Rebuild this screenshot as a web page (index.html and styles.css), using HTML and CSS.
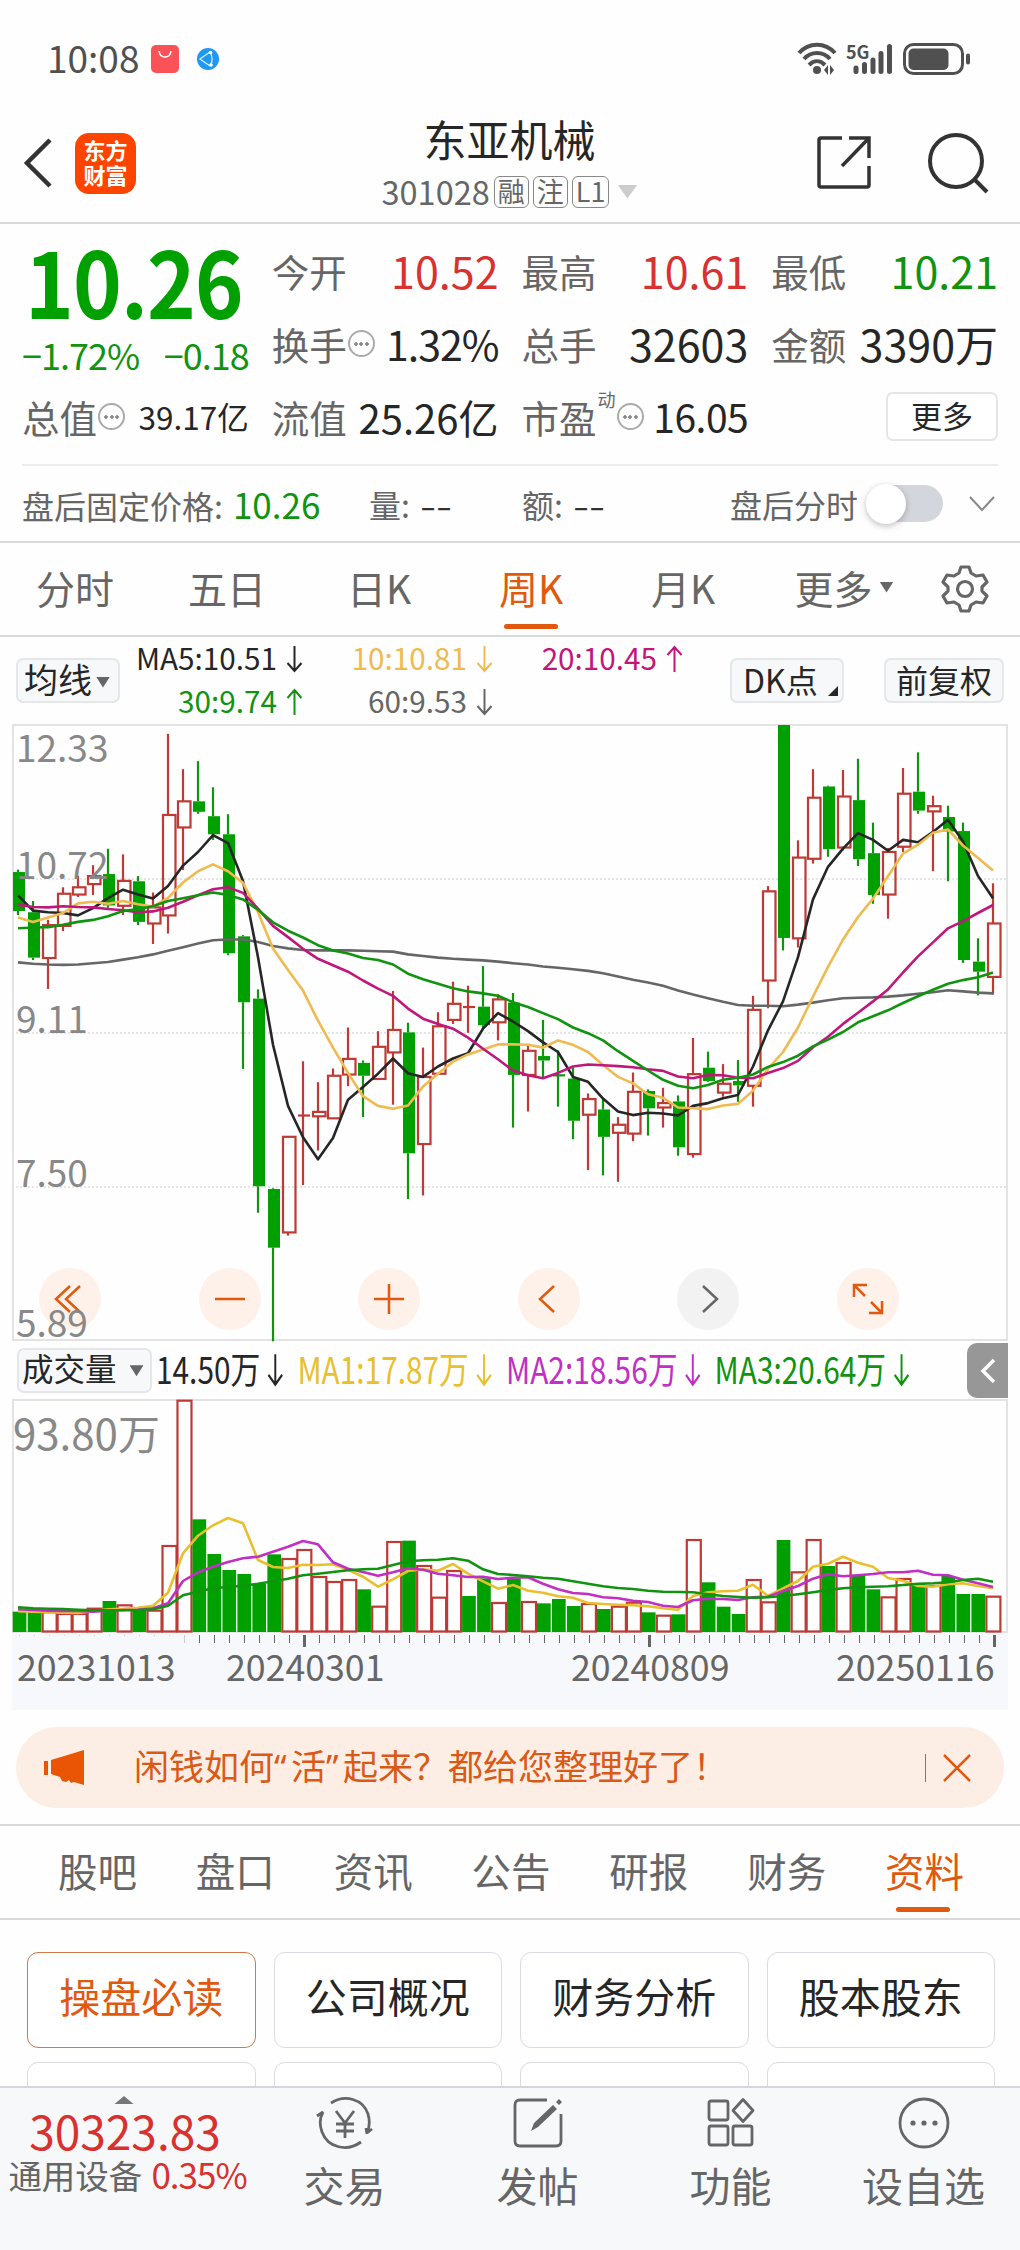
FILE: index.html
```html
<!DOCTYPE html>
<html lang="zh-CN">

<head>
    <meta charset="UTF-8">
    <meta name="viewport" content="width=device-width, initial-scale=1.0">
    <title>东亚机械 301028</title>
    <link rel="stylesheet" href="styles.css">
</head>

<body>

    <!-- 状态栏 -->
    <div class="status-bar">
        <span class="time">10:08</span>
        <svg class="app-icon" width="28" height="28" viewBox="0 0 28 28">
            <rect width="28" height="28" rx="5" fill="#fb5258" />
            <path d="M8 6c1 8 11 8 12 0" fill="none" stroke="#fff" stroke-width="1.6" />
        </svg>
        <svg class="net-icon" width="22" height="22" viewBox="0 0 22 22">
            <circle cx="11" cy="11" r="11" fill="#1e98f0" />
            <path d="M13 4L3 11l10 7M13 4c3 5 3 9 0 14" fill="none" stroke="#d5edff" stroke-width="1.3" />
            <circle cx="13.500" cy="4.500" r="1.800" fill="#fff" />
            <circle cx="14" cy="17" r="1.800" fill="#fff" />
        </svg>
        <svg class="signal" width="176" height="48" viewBox="0 -6 176 48">
            <g fill="none" stroke="#505050" stroke-width="4">
                <path d="M2 12c10-11 26-11 36 0" />
                <path d="M7 18c7-8 19-8 26 0" />
                <path d="M12 24c5-5 11-5 16 0" />
            </g>
            <circle cx="20" cy="29" r="4" fill="#505050" />
            <path d="M27 29l4-5v10zM37 29l-4-5v10z" fill="#505050" />
            <text class="sig-text" x="49" y="18">5G</text>
            <g stroke="#505050" stroke-width="5" stroke-linecap="round">
                <path d="M59 27v3.500M67.500 23.500v7M76 19v11.500M84 12.500v18M92.500 5.500v25" />
            </g>
            <rect x="107.500" y="3.500" width="58" height="29" rx="9" fill="none" stroke="#505050" stroke-width="3" />
            <rect x="111.500" y="7.500" width="40" height="21.500" rx="5" fill="#505050" />
            <path d="M171 14.500v7" stroke="#505050" stroke-width="4" stroke-linecap="round" />
        </svg>
    </div>

    <!-- 标题栏 -->
    <div class="header">
        <svg class="back" width="32" height="52" viewBox="0 0 32 52">
            <path d="M28 3L5 26l23 23" fill="none" stroke="#333" stroke-width="4.500" />
        </svg>
        <div class="logo"><span>东方</span><span>财富</span></div>
        <div class="title">
            <div class="name">东亚机械</div>
            <div class="code">301028<i>融</i><i>注</i><i>L1</i><b class="caret"></b></div>
        </div>
        <svg class="share" width="56" height="56" viewBox="0 0 56 56" fill="none" stroke="#333" stroke-width="3.500">
            <path d="M26 3H5q-2 0-2 2v45q0 2 2 2h46q2 0 2-2V31M33 3h20v20M53 3L26 31" />
        </svg>
        <svg class="search" width="64" height="64" viewBox="0 0 64 64" fill="none" stroke="#333" stroke-width="4">
            <circle cx="30" cy="30" r="26" />
            <path d="M48 48l13 13" />
        </svg>
    </div>

    <!-- 行情数据 -->
    <div class="quote">
        <div class="main-price">
            <div class="price">10.26</div>
            <div class="change"><span>−1.72%</span><span>−0.18</span></div>
        </div>
        <div class="cell"><label>今开</label><span class="up">10.52</span></div>
        <div class="cell"><label>最高</label><span class="up">10.61</span></div>
        <div class="cell"><label>最低</label><span class="down">10.21</span></div>
        <div class="cell"><label>换手</label><em class="info"></em><span class="rate">1.32%</span></div>
        <div class="cell"><label>总手</label><span>32603</span></div>
        <div class="cell"><label>金额</label><span>3390万</span></div>
        <div class="cell"><label>总值</label><em class="info"></em><span class="small">39.17亿</span></div>
        <div class="cell"><label>流值</label><span class="mid">25.26亿</span></div>
        <div class="cell"><label>市盈</label><sup>动</sup><em class="info"></em><span class="pe">16.05</span></div>
        <div class="cell"><button class="more">更多</button></div>
    </div>

    <div class="after">
        <span class="fixed">盘后固定价格:<b>10.26</b></span>
        <span class="vol">量:<b>--</b></span>
        <span class="amt">额:<b>--</b></span>
        <span class="switch-label">盘后分时</span>
        <span class="switch"></span>
        <svg width="26" height="16" viewBox="0 0 26 16">
            <path d="M1 1l12 13L25 1" fill="none" stroke="#888" stroke-width="2" />
        </svg>
    </div>

    <!-- 周期切换 -->
    <div class="period">
        <span>分时</span>
        <span>五日</span>
        <span>日K</span>
        <span class="active">周K</span>
        <span>月K</span>
        <span class="last">更多<b class="caret"></b></span>
        <svg width="48" height="48" viewBox="0 0 48 48" fill="none" stroke="#666" stroke-width="3.200" stroke-linejoin="round">
            <path d="M20 2h8l2 6 5 3 7-1 4 7-5 5v4l5 5-4 7-7-1-5 3-2 6h-8l-2-6-5-3-7 1-4-7 5-5v-4l-5-5 4-7 7 1 5-3z" />
            <circle cx="24" cy="24" r="7.500" />
        </svg>
    </div>

    <!-- 均线指标 -->
    <div class="ma-bar">
        <button class="ma-btn">均线<b class="caret"></b></button>
        <div class="ma-values">
            <span class="c5">MA5:10.51<svg class="arrow"><use href="#down" /></svg></span>
            <span class="c10">10:10.81<svg class="arrow"><use href="#down" /></svg></span>
            <span class="c20">20:10.45<svg class="arrow"><use href="#up" /></svg></span>
            <span class="c30">30:9.74<svg class="arrow"><use href="#up" /></svg></span>
            <span class="c60">60:9.53<svg class="arrow"><use href="#down" /></svg></span>
        </div>
        <button class="dk">DK点</button>
        <button class="fq">前复权</button>
    </div>

    <!-- K线图 -->
    <div class="chart">
        <div class="tools">
            <span><svg viewBox="0 0 62 62"><path d="M31 18L17 31l14 13M41 18L27 31l14 13" /></svg></span>
            <span><svg viewBox="0 0 62 62"><path d="M16 31h30" /></svg></span>
            <span><svg viewBox="0 0 62 62"><path d="M16 31h30M31 16v30" /></svg></span>
            <span><svg viewBox="0 0 62 62"><path d="M36 18L22 31l14 13" /></svg></span>
            <span class="off"><svg viewBox="0 0 62 62"><path d="M26 18l14 13-14 13" /></svg></span>
            <span><svg viewBox="0 0 62 62"><path d="M17 29V17h13M17 17l11 11M45 33v12H32M45 45L34 34" /></svg></span>
        </div>
        <svg id="kline" width="996" height="617"></svg>
    </div>

    <!-- 成交量 -->
    <div class="vol-bar">
        <button class="vol-btn">成交量<b class="caret"></b></button>
        <div class="vol-values">
            <span class="v0">14.50万<svg class="arrow"><use href="#down" /></svg></span>
            <span class="v1">MA1:17.87万<svg class="arrow"><use href="#down" /></svg></span>
            <span class="v2">MA2:18.56万<svg class="arrow"><use href="#down" /></svg></span>
            <span class="v3">MA3:20.64万<svg class="arrow"><use href="#down" /></svg></span>
        </div>
        <div class="collapse">
            <svg width="16" height="26" viewBox="0 0 16 26">
                <path d="M14 2L3 13l11 11" fill="none" stroke="#fff" stroke-width="3.500" />
            </svg>
        </div>
    </div>
    <div class="volume">
        <svg id="volume" width="996" height="234"></svg>
    </div>
    <div class="axis">
        <svg id="ticks" width="996" height="14"></svg>
        <div class="dates">
            <span>20231013</span>
            <span>20240301</span>
            <span>20240809</span>
            <span>20250116</span>
        </div>
    </div>

    <!-- 广告条 -->
    <div class="banner">
        <svg width="44" height="36" viewBox="0 0 44 36" fill="#e95504">
            <path d="M1 11h4v14H1zM8 10L41 0v35l-10-3-3 1-2-3-3 2-4-1-2-4-9-3z" />
        </svg>
        <p>闲钱如何<q>“</q>活<q>”</q>起来？都给您整理好了！</p>
        <svg class="close" width="30" height="28" viewBox="0 0 30 28">
            <path d="M2 1l26 26M28 1L2 27" stroke="#e0590f" stroke-width="2.500" />
        </svg>
    </div>

    <!-- 资料导航 -->
    <div class="nav">
        <span>股吧</span>
        <span>盘口</span>
        <span>资讯</span>
        <span>公告</span>
        <span>研报</span>
        <span>财务</span>
        <span class="active">资料</span>
    </div>
    <div class="cards">
        <div class="card active">操盘必读</div>
        <div class="card">公司概况</div>
        <div class="card">财务分析</div>
        <div class="card">股本股东</div>
        <div class="card"></div>
        <div class="card"></div>
        <div class="card"></div>
        <div class="card"></div>
    </div>

    <!-- 底部栏 -->
    <div class="footer">
        <div class="index">
            <b class="caret-up"></b>
            <div class="point">30323.83</div>
            <div class="sector">通用设备<span>0.35%</span></div>
        </div>
        <div class="tab">
            <svg width="60" height="52" viewBox="0 0 60 52" fill="none" stroke="#666" stroke-width="2.800">
                <path d="M16 6C30-3 48 2 53 17q3 10-1 19l5-4M46 45C32 55 13 51 7 35q-4-11 1-20l-6 4M52 37l-1-6" />
                <path d="M21 14l9 12 9-12M30 26v15M21 27h18M21 34h18" />
            </svg>
            <span>交易</span>
        </div>
        <div class="tab">
            <svg width="52" height="52" viewBox="0 0 52 52" fill="none" stroke="#666" stroke-width="2.800">
                <path d="M35 3H8Q3 3 3 8v36q0 5 5 5h36q5 0 5-5V17" />
                <path d="M19 34l3-8L41 8l4 4-19 18zM44 5l3-3 3 3-3 3z" fill="#666" stroke="none" />
            </svg>
            <span>发帖</span>
        </div>
        <div class="tab">
            <svg width="50" height="52" viewBox="0 0 50 52" fill="none" stroke="#666" stroke-width="2.800">
                <rect x="3" y="4" width="19" height="19" rx="2" />
                <rect x="3" y="29" width="19" height="19" rx="2" />
                <rect x="27" y="29" width="19" height="19" rx="2" />
                <path d="M37 2.500l10 11-10 11-10-11z" stroke-linejoin="round" />
            </svg>
            <span>功能</span>
        </div>
        <div class="tab">
            <svg width="52" height="52" viewBox="0 0 52 52">
                <circle cx="26" cy="26" r="24" fill="none" stroke="#666" stroke-width="2.800" />
                <g fill="#666">
                    <circle cx="15" cy="26" r="2.600" />
                    <circle cx="26" cy="26" r="2.600" />
                    <circle cx="37" cy="26" r="2.600" />
                </g>
            </svg>
            <span>设自选</span>
        </div>
    </div>

    <svg width="0" height="0" class="defs">
        <symbol id="down" viewBox="0 0 16 28">
            <path d="M8 1v25M1 18l7 8 7-8" fill="none" stroke="currentColor" stroke-width="2" />
        </symbol>
        <symbol id="up" viewBox="0 0 16 28">
            <path d="M8 27V2M1 10l7-8 7 8" fill="none" stroke="currentColor" stroke-width="2" />
        </symbol>
    </svg>

    <script src="chart.js"></script>
</body>

</html>
```

FILE: styles.css
```css
* {
    box-sizing: border-box;
}

body {
    margin: 0;
    width: 1020px;
    height: 2250px;
    overflow: hidden;
    background: #fefefe;
    color: #262626;
    font-family: "Noto Sans CJK SC", sans-serif;
    line-height: 1;
}

button {
    font-family: inherit;
    color: #262626;
    padding: 0;
    line-height: 1;
}

svg {
    display: block;
    flex: none;
}

i,
em {
    font-style: normal;
}

.defs {
    position: absolute;
}

/* 小三角 */
.caret {
    display: inline-block;
    width: 14px;
    height: 11px;
    background: #666;
    clip-path: polygon(0 0, 100% 0, 50% 100%);
}

/* 状态栏 */
.status-bar {
    height: 118px;
    padding: 0 47px 0 47px;
    display: flex;
    align-items: center;
    color: #505050;
}

.time {
    font-size: 37px;
    width: 104px;
    margin-top: -3px;
}

.net-icon {
    margin-left: 18px;
}

.signal {
    margin-left: auto;
}

.sig-text {
    font-size: 18px;
    font-weight: bold;
    fill: #505050;
}

/* 标题栏 */
.header {
    height: 106px;
    padding: 0 30px 14px 22px;
    border-bottom: 2px solid #d9d9d9;
    display: flex;
    align-items: center;
}

.logo {
    width: 61px;
    height: 61px;
    margin-left: 21px;
    border-radius: 14px;
    background: #ff4400;
    color: #fff;
    font-size: 22px;
    font-weight: bold;
    display: flex;
    flex-direction: column;
    align-items: center;
    justify-content: center;
    gap: 3px;
    padding-bottom: 3px;
}

.title {
    flex: 1;
    padding-left: 67px;
}

.name {
    font-size: 43px;
    text-align: center;
    margin-top: -1px;
}

.code {
    display: flex;
    justify-content: center;
    align-items: center;
    margin-top: 15px;
    font-size: 32.500px;
    color: #666;
    gap: 4px;
}

.code i {
    height: 32px;
    padding: 0 3px;
    border: 1.500px solid #888;
    border-radius: 6px;
    font-size: 27px;
    line-height: 27px;
}

.code .caret {
    width: 20px;
    height: 14px;
    margin-left: 4px;
    background: #ccc;
}

.search {
    margin-left: 54px;
}

/* 行情 */
.quote {
    height: 242px;
    margin: 0 22px;
    padding-top: 10px;
    border-bottom: 2px solid #ececec;
    display: grid;
    grid-template-columns: repeat(4, minmax(0, 1fr));
    grid-template-rows: 73px 73px 73px;
    column-gap: 23px;
}

.main-price {
    grid-row: span 2;
    color: #00a000;
}

.price {
    font-size: 91px;
    font-weight: bold;
    margin: 0 0 0 3px;
    letter-spacing: -1px;
    transform: scaleX(.91);
    transform-origin: left;
}

.change {
    display: flex;
    justify-content: space-between;
    font-size: 36px;
    letter-spacing: -1px;
    color: #109410;
    margin-top: 11px;
}

.cell {
    display: flex;
    align-items: center;
    justify-content: flex-end;
    white-space: nowrap;
}

.cell label {
    margin-right: auto;
    font-size: 37.500px;
    color: #666;
}

.cell span {
    font-size: 43px;
}

.cell span.mid {
    font-size: 40px;
}

.cell span.small {
    font-size: 31.500px;
}

.cell span.rate {
    font-size: 41px;
    letter-spacing: -1px;
}

.cell span.pe {
    font-size: 39px;
    letter-spacing: -.5px;
}

.cell .up {
    color: #d93030;
}

.cell .down {
    color: #109410;
}

.info {
    width: 27px;
    height: 27px;
    border: 2px solid #aaa;
    border-radius: 50%;
    background: radial-gradient(circle, #888 1.500px, transparent 2px) center / 6px 6px no-repeat, radial-gradient(circle, #888 1.500px, transparent 2px) 3px center / 6px 6px no-repeat, radial-gradient(circle, #888 1.500px, transparent 2px) 14px center / 6px 6px no-repeat;
}

.cell label:has(+ .info) {
    margin-right: 1px;
}

.cell .info + span {
    margin-left: auto;
}

.cell label:has(+ sup) {
    margin-right: 0;
}

.cell sup {
    font-size: 18px;
    line-height: 18px;
    color: #666;
    align-self: flex-start;
    margin: 10px 1px 0 1px;
}

.more {
    width: 112px;
    height: 49px;
    border: 2px solid #e5e5e5;
    border-radius: 7px;
    background: #fff;
    font-size: 31px;
    padding-bottom: 4px;
}

/* 盘后 */
.after {
    height: 77px;
    padding: 0 25px 0 22px;
    border-bottom: 2px solid #d9d9d9;
    display: flex;
    align-items: center;
    font-size: 32px;
    color: #666;
}

.after span {
    white-space: nowrap;
}

.after b {
    display: inline-block;
    font-weight: normal;
    color: #333;
    margin-left: 10px;
    transform: scaleX(1.45);
    transform-origin: left;
}

.fixed {
    width: 347px;
}

.after .fixed b {
    font-size: 35px;
    color: #109410;
    transform: none;
}

.vol {
    width: 153px;
}

.amt {
    width: 208px;
}

.switch {
    width: 76px;
    height: 37px;
    margin-left: 9px;
    border-radius: 19px;
    background: #d3d6dc;
    position: relative;
}

.switch::before {
    content: "";
    position: absolute;
    left: -1px;
    top: -1px;
    width: 40px;
    height: 40px;
    border-radius: 50%;
    background: #fff;
    box-shadow: 0 2px 6px rgba(0, 0, 0, .25);
}

.after svg {
    margin-left: auto;
}

/* 周期 */
.period {
    height: 94px;
    border-bottom: 2px solid #d9d9d9;
    display: flex;
    align-items: center;
    font-size: 39px;
    color: #666;
}

.period span,
.nav span {
    height: 100%;
    display: flex;
    align-items: center;
    position: relative;
    padding-bottom: 4px;
}

.period span {
    width: 152px;
    justify-content: center;
    padding-right: 2px;
}

.period .last {
    width: 158px;
    padding-left: 12px;
}

.period svg {
    margin-left: 23px;
}

.period .caret {
    margin-left: 7px;
}

.period .active,
.nav .active {
    color: #e0590f;
}

.period .active::after,
.nav .active::after {
    content: "";
    position: absolute;
    left: calc(50% - 28px);
    bottom: 6px;
    width: 54px;
    height: 5px;
    border-radius: 3px;
    background: #e0590f;
}

/* 均线 */
.ma-bar {
    height: 87px;
    padding: 0 16px;
    display: flex;
    align-items: center;
}

.ma-bar button,
.vol-btn {
    height: 45px;
    border: 2px solid #e4e6ea;
    border-radius: 7px;
    background: #f7f8fa;
    font-size: 32px;
    padding-bottom: 4px;
}

.ma-bar .ma-btn {
    width: 104px;
    font-size: 34px;
    text-align: left;
    padding-left: 6px;
}

.ma-btn .caret {
    margin-left: 4px;
    vertical-align: 5px;
}

.ma-values {
    width: 570px;
    margin-left: -7px;
    display: grid;
    grid-template-columns: repeat(3, 190px);
    row-gap: 14px;
    font-size: 29.700px;
    margin-top: -3px;
}

.ma-values span {
    display: flex;
    align-items: center;
    justify-content: flex-end;
    height: 29px;
}

.ma-values .arrow {
    width: 17px;
    height: 28px;
    margin: 3px 0 0 9px;
}

.c5 { color: #262626; }
.c10 { color: #efbb50; }
.c20 { color: #c0177c; }
.c30 { color: #109410; }
.c60 { color: #666; }

.ma-bar .dk {
    width: 114px;
    margin-left: auto;
    position: relative;
    text-align: left;
    padding-left: 11px;
}

.dk::after {
    content: "";
    position: absolute;
    right: 4px;
    bottom: 5px;
    border: 5px solid #262626;
    border-top-color: transparent;
    border-left-color: transparent;
}

.ma-bar .fq {
    width: 120px;
    margin-left: 40px;
}

/* K线 */
.chart {
    height: 617px;
    margin-left: 12px;
    position: relative;
}

#kline {
    position: relative;
    overflow: visible;
}

.grid {
    stroke: #ddd;
    stroke-width: 1.500;
    stroke-dasharray: 2 2;
}

.frame {
    fill: none;
    stroke: #e3e3e3;
    stroke-width: 2;
}

.scale {
    font-size: 37px;
    fill: #888;
}

.red {
    fill: none;
    stroke: #bd3a35;
    stroke-width: 2.200;
}

.green {
    fill: #00a000;
    stroke: none;
}

.wick-red {
    stroke: #bd3a35;
    stroke-width: 2.200;
}

.wick-green {
    stroke: #109410;
    stroke-width: 2.200;
}

.line {
    fill: none;
    stroke-width: 2.600;
    stroke-linejoin: round;
}

.tools {
    position: absolute;
    left: 27px;
    right: 121px;
    bottom: 11px;
    display: flex;
    justify-content: space-between;
}

.tools span {
    width: 62px;
    height: 62px;
    border-radius: 50%;
    background: #fef1ea;
}

.tools path {
    fill: none;
    stroke: #e0590f;
    stroke-width: 2.500;
}

.tools .off {
    background: #f2f2f2;
}

.tools .off path {
    stroke: #666;
}

/* 成交量 */
.vol-bar {
    height: 58px;
    padding-left: 17px;
    display: flex;
    align-items: center;
    position: relative;
}

.vol-btn {
    width: 135px;
    font-size: 31.500px;
    white-space: nowrap;
    text-align: left;
    padding-left: 3px;
    flex: none;
}

.vol-btn .caret {
    margin-left: 13px;
    vertical-align: 5px;
}

.vol-values {
    display: flex;
    align-items: center;
    gap: 17px;
    margin-left: 4px;
    font-size: 37px;
    white-space: nowrap;
    transform: scaleX(.806);
    transform-origin: left;
    margin-top: -3px;
}

.vol-values span {
    display: flex;
    align-items: center;
}

.vol-values .arrow {
    width: 20px;
    height: 34px;
    margin: 3px 0 0 9px;
}

.v0 { color: #262626; }
.v1 { color: #e8c02e; }
.v2 { color: #c030c4; }
.v3 { color: #109410; }

.collapse {
    position: absolute;
    right: 12px;
    top: 2px;
    width: 41px;
    height: 55px;
    border-radius: 10px 0 0 10px;
    background: #979797;
    display: flex;
    align-items: center;
    justify-content: center;
}

.volume {
    height: 234px;
    margin-left: 12px;
}

.vscale {
    font-size: 42px;
    fill: #888;
}

.bar-red {
    fill: #fff;
    stroke: #bd3a35;
    stroke-width: 2.200;
}

.axis {
    width: 996px;
    height: 77px;
    margin-left: 12px;
    background: #f7f8fb;
}

.dates {
    display: flex;
    font-size: 35.700px;
    color: #666;
    margin-top: 1px;
}

.dates span {
    padding-left: 5px;
}

.dates span:nth-child(1) {
    width: 209px;
}

.dates span:nth-child(2) {
    width: 345px;
}

.dates span:nth-child(3) {
    width: 265px;
}

/* 广告条 */
.banner {
    height: 81px;
    margin: 17px 16px 16px;
    padding: 0 32px 0 27px;
    border-radius: 41px;
    background: #fdeee5;
    color: #d95a16;
    display: flex;
    align-items: center;
    font-size: 35px;
}

.banner p {
    margin: -4px 0 0 47px;
    white-space: nowrap;
}

.banner q {
    quotes: none;
    display: inline-block;
    width: 17px;
    font-family: "Noto Sans", sans-serif;
}

.close {
    width: 47px;
    margin-left: auto;
    border-left: 1.500px solid #e0590f;
    padding-left: 16px;
}

/* 导航 */
.nav {
    height: 96px;
    padding: 0 56px 0 58px;
    border-top: 2px solid #d9d9d9;
    border-bottom: 2px solid #d9d9d9;
    display: flex;
    justify-content: space-between;
    font-size: 39.500px;
    color: #666;
}

.cards {
    height: 166px;
    padding: 32px 25px 0 27px;
    overflow: hidden;
    display: grid;
    grid-template-columns: repeat(4, 1fr);
    grid-auto-rows: 96px;
    gap: 14px 18px;
}

.card {
    border: 1.500px solid #d9dbde;
    border-radius: 11px;
    background: #fff;
    font-size: 41px;
    display: flex;
    align-items: center;
    justify-content: center;
    padding-bottom: 9px;
}

.card.active {
    border-color: #d07a4a;
    color: #e0590f;
}

/* 底部 */
.footer {
    height: 164px;
    border-top: 2px solid #d3d6da;
    background: #f7f8fa;
    display: flex;
    color: #666;
}

.index {
    width: 248px;
    padding-top: 8px;
    display: flex;
    flex-direction: column;
    align-items: center;
}

.caret-up {
    width: 19px;
    height: 8px;
    background: #777;
    clip-path: polygon(50% 0, 100% 100%, 0 100%);
}

.point {
    font-size: 46px;
    color: #d93030;
    margin: 3px 0 0 2px;
}

.sector {
    font-size: 33.500px;
    white-space: nowrap;
    margin-top: 3px;
    margin-left: 7px;
}

.sector span {
    font-size: 35px;
    color: #d93030;
    margin-left: 9px;
    letter-spacing: -1px;
}

.tab {
    width: 193px;
    padding-top: 9px;
    display: flex;
    flex-direction: column;
    align-items: center;
    font-size: 41px;
    gap: 15px;
}
```

FILE: chart.js
```javascript
var NS = 'http://www.w3.org/2000/svg';
var STEP = 15;

// 每根K线: [颜色, 最高, 实体上沿, 实体下沿, 最低]
var candles = [
    ['g', 372, 378, 475, 485], ['g', 450, 478, 591, 597], ['r', 497, 510, 592, 669], ['r', 416, 432, 512, 525],
    ['r', 387, 416, 434, 440], ['r', 361, 388, 408, 435], ['g', 320, 383, 461, 467], ['r', 334, 400, 462, 485],
    ['g', 388, 401, 502, 510], ['r', 429, 466, 506, 557], ['r', 34, 236, 486, 531], ['r', 122, 202, 267, 373],
    ['g', 102, 202, 228, 233], ['g', 167, 239, 284, 298], ['g', 234, 284, 580, 585], ['g', 535, 538, 702, 868],
    ['g', 670, 693, 1160, 1226], ['g', 1165, 1167, 1313, 1546], ['r', 1037, 1037, 1275, 1283], ['r', 849, 984, 984, 1157],
    ['r', 901, 975, 986, 1071], ['r', 867, 885, 991, 991], ['r', 765, 843, 882, 911], ['g', 847, 853, 885, 988],
    ['r', 774, 813, 893, 893], ['r', 674, 771, 827, 957], ['g', 753, 777, 1078, 1192], ['r', 815, 888, 1055, 1183],
    ['r', 727, 762, 880, 880], ['r', 651, 706, 746, 756], ['r', 661, 714, 714, 778], ['g', 612, 713, 759, 768],
    ['r', 682, 695, 752, 797], ['g', 679, 703, 883, 1014], ['r', 806, 823, 883, 974], ['g', 746, 836, 847, 890],
    ['g', 822, 884, 884, 962], ['g', 865, 892, 997, 1043], ['r', 929, 943, 982, 1120], ['g', 943, 969, 1037, 1133],
    ['r', 988, 1007, 1027, 1149], ['r', 877, 925, 1029, 1048], ['g', 919, 923, 966, 1034], ['r', 915, 953, 964, 1014],
    ['g', 934, 949, 1063, 1084], ['r', 791, 881, 1080, 1089], ['g', 825, 865, 898, 900], ['r', 856, 905, 927, 937],
    ['g', 846, 898, 909, 950], ['r', 686, 721, 910, 962], ['r', 413, 426, 648, 717], ['g', 12, 12, 542, 573],
    ['r', 299, 342, 543, 566], ['r', 122, 193, 345, 357], ['g', 163, 165, 321, 340], ['r', 124, 190, 317, 324],
    ['g', 96, 199, 346, 363], ['g', 255, 331, 435, 457], ['r', 318, 328, 434, 494], ['r', 119, 183, 315, 328],
    ['g', 80, 178, 225, 233], ['r', 188, 214, 227, 376], ['g', 213, 241, 277, 401], ['g', 255, 276, 597, 604],
    ['g', 543, 601, 626, 685], ['r', 406, 506, 639, 683]
];

var averages = [
    { color: '#666666', data: [603, 606, 608, 609, 608, 605, 602, 596, 590, 583, 574, 565, 556, 548, 546, 546, 552, 562, 568, 572, 573, 573, 573, 574, 575, 576, 583, 587, 591, 594, 596, 598, 601, 605, 608, 613, 616, 620, 624, 630, 638, 646, 653, 661, 673, 683, 692, 701, 709, 711, 711, 712, 708, 703, 697, 692, 691, 690, 688, 685, 681, 677, 672, 675, 678, 680] },
    { color: '#262626', data: [436, 474, 478, 480, 486, 468, 443, 422, 434, 444, 413, 362, 328, 286, 306, 400, 590, 808, 960, 1038, 1093, 1040, 945, 913, 880, 842, 879, 888, 862, 842, 829, 768, 729, 750, 774, 802, 826, 888, 900, 942, 974, 983, 977, 979, 984, 960, 953, 941, 933, 862, 772, 700, 590, 446, 365, 320, 281, 298, 325, 298, 304, 278, 248, 302, 388, 443] },
    { color: '#efbb50', data: [491, 502, 491, 480, 456, 452, 457, 450, 458, 464, 442, 404, 376, 359, 376, 405, 478, 568, 622, 673, 748, 815, 878, 936, 960, 967, 959, 912, 880, 850, 832, 820, 807, 807, 808, 815, 797, 808, 826, 858, 888, 904, 931, 940, 964, 966, 968, 959, 955, 922, 868, 826, 765, 688, 614, 546, 490, 444, 388, 332, 310, 280, 272, 312, 343, 374] },
    { color: '#c0177c', data: [459, 465, 466, 463, 465, 466, 470, 473, 478, 476, 467, 452, 436, 421, 416, 430, 469, 512, 540, 569, 594, 610, 626, 648, 668, 686, 718, 743, 756, 768, 790, 818, 844, 872, 884, 891, 878, 862, 857, 859, 861, 864, 869, 873, 887, 891, 883, 884, 890, 891, 878, 866, 848, 814, 788, 756, 728, 700, 670, 628, 588, 553, 518, 500, 480, 460] },
    { color: '#109410', data: [518, 516, 515, 509, 502, 497, 488, 475, 470, 463, 450, 443, 436, 429, 435, 446, 472, 503, 524, 541, 560, 573, 581, 592, 597, 608, 631, 645, 656, 667, 675, 680, 686, 702, 714, 729, 744, 765, 779, 797, 824, 848, 872, 895, 910, 916, 908, 895, 890, 882, 863, 851, 835, 812, 795, 776, 752, 737, 722, 704, 687, 671, 656, 647, 640, 628] }
];

// 成交量柱顶, 负数为绿柱
var volumes = [-815, -815, 817, 822, 822, 806, -783, 796, -808, 812, 618, 182, -538, -642, -690, -702, -732, -643, 657, 630, 711, 726, 720, -748, 800, 606, -602, 678, 773, 693, -768, -715, 789, -715, 786, -790, -777, -798, 792, -807, 800, 788, -817, 827, -823, 600, -727, -800, -822, 720, 787, -600, 697, 600, -678, 669, -706, -748, 772, 717, -732, 738, -708, -762, -762, 770];

var volAverages = [
    { color: '#e8c02e', data: [814, 815, 816, 818, 819, 814, 808, 806, 803, 797, 758, 640, 587, 556, 534, 550, 660, 681, 684, 674, 675, 673, 689, 710, 740, 718, 693, 688, 692, 672, 701, 724, 746, 735, 752, 758, 769, 773, 789, 792, 794, 796, 799, 805, 809, 768, 757, 754, 752, 734, 768, 745, 723, 680, 671, 650, 668, 680, 714, 722, 738, 740, 733, 730, 738, 745] },
    { color: '#c030c4', data: [808, 810, 812, 813, 813, 815, 812, 810, 809, 805, 790, 723, 697, 680, 666, 655, 650, 635, 620, 603, 613, 667, 686, 696, 707, 697, 685, 689, 701, 706, 711, 710, 717, 713, 712, 731, 748, 759, 762, 772, 775, 782, 786, 797, 801, 781, 776, 777, 780, 772, 770, 753, 738, 716, 703, 709, 706, 702, 697, 697, 692, 704, 706, 719, 730, 741] },
    { color: '#109410', data: [802, 805, 806, 807, 809, 811, 811, 811, 810, 808, 797, 766, 755, 745, 741, 737, 731, 724, 716, 706, 701, 696, 691, 688, 686, 675, 664, 661, 659, 655, 662, 688, 702, 705, 709, 713, 716, 724, 731, 739, 744, 747, 752, 755, 756, 757, 763, 768, 771, 773, 772, 768, 763, 757, 750, 745, 742, 740, 739, 735, 731, 730, 727, 720, 716, 725] }
];

function add(parent, name, attrs, text) {
    var el = document.createElementNS(NS, name);
    for (var key in attrs) {
        el.setAttribute(key, attrs[key]);
    }
    if (text) {
        el.textContent = text;
    }
    parent.appendChild(el);
    return el;
}

function drawLine(svg, item, toY) {
    var points = item.data.map(function (v, i) {
        return (6 + i * STEP) + ',' + toY(v).toFixed(1);
    });
    add(svg, 'polyline', { 'class': 'line', points: points.join(' '), stroke: item.color });
}

// K线图
function drawKline() {
    var svg = document.getElementById('kline');
    function toY(v) {
        return (v - 12) / 2.489 + 1;
    }

    [155, 309, 463].forEach(function (y) {
        add(svg, 'line', { 'class': 'grid', x1: 0, x2: 995, y1: y, y2: y });
    });
    add(svg, 'rect', { 'class': 'frame', x: 1, y: 1, width: 994, height: 615 });

    candles.forEach(function (c, i) {
        var x = 6 + i * STEP;
        var name = c[0] === 'g' ? 'green' : 'red';
        var top = toY(c[2]), bottom = toY(c[3]);

        add(svg, 'line', { 'class': 'wick-' + name, x1: x, x2: x, y1: toY(c[1]), y2: top });
        add(svg, 'line', { 'class': 'wick-' + name, x1: x, x2: x, y1: bottom, y2: toY(c[4]) });
        if (bottom - top < 1) {
            add(svg, 'line', { 'class': 'wick-' + name, x1: x - 5, x2: x + 7, y1: top, y2: top });
        } else if (name === 'green') {
            add(svg, 'rect', { 'class': 'green', x: x - 5, y: top, width: 12, height: bottom - top });
        } else {
            add(svg, 'rect', { 'class': 'red', x: x - 5, y: top, width: 12.5, height: bottom - top });
        }
    });

    averages.forEach(function (item) {
        drawLine(svg, item, toY);
    });

    [['12.33', 38], ['10.72', 155], ['9.11', 309], ['7.50', 463], ['5.89', 613]].forEach(function (s) {
        add(svg, 'text', { 'class': 'scale', x: 4, y: s[1] }, s[0]);
    });
}

// 成交量图
function drawVolume() {
    var svg = document.getElementById('volume');
    function toY(v) {
        return (v - 180) / 3 + 1;
    }

    add(svg, 'rect', { 'class': 'frame', x: 1, y: 1, width: 994, height: 232 });
    volumes.forEach(function (v, i) {
        var x = 0.7 + i * 14.98;
        var y = toY(Math.abs(v));
        if (v < 0) {
            add(svg, 'rect', { 'class': 'green', x: x, y: y, width: 13.7, height: 233 - y });
        } else {
            add(svg, 'rect', { 'class': 'bar-red', x: x, y: y, width: 14, height: 232.5 - y });
        }
    });
    volAverages.forEach(function (item) {
        drawLine(svg, item, toY);
    });
    add(svg, 'text', { 'class': 'vscale', x: 1, y: 51 }, '93.80万');
}

// 时间刻度
function drawTicks() {
    var svg = document.getElementById('ticks');
    for (var i = 0; i < 66; i++) {
        var major = i === 19 || i === 42 || i === 65;
        add(svg, 'line', {
            x1: 7.5 + i * STEP,
            x2: 7.5 + i * STEP,
            y1: 2,
            y2: i < 11 ? 3 : major ? 14 : 10,
            stroke: i < 12 ? '#ccc' : '#666',
            'stroke-width': major ? 3 : 1
        });
    }
}

drawKline();
drawVolume();
drawTicks();
```
